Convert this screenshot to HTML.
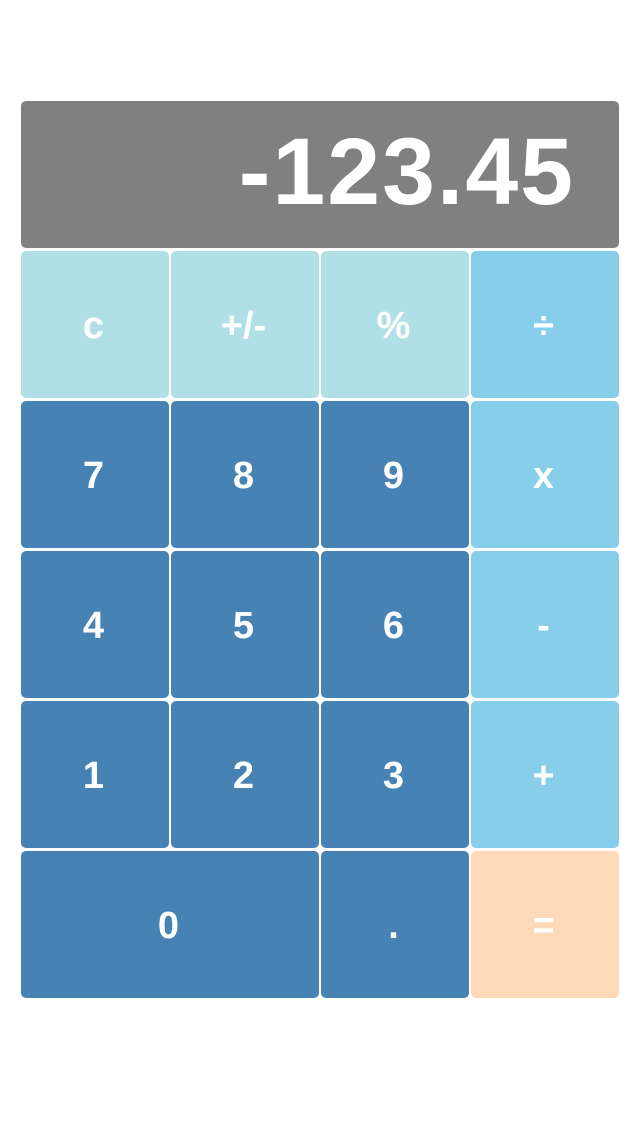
<!DOCTYPE html>
<html><head><style>
body{margin:0;width:640px;height:1136px;background:#fff;position:relative;font-family:"Liberation Sans",Arial,sans-serif;overflow:hidden}
.d{position:absolute;left:21px;top:101px;width:598px;height:147px;background:#808080;border-radius:5px}
.t{position:absolute;right:44px;bottom:28px;color:#fff;font-weight:bold;font-size:95px;line-height:1;letter-spacing:2px}
.b{position:absolute;width:148px;height:147px;border-radius:5px;color:#fff;font-weight:bold;font-size:38px;display:flex;align-items:center;justify-content:center;padding-top:4px;box-sizing:border-box;text-indent:-3px}
.p{background:#B0E0E6}.s{background:#87CEEB}.n{background:#4682B4}.q{background:#FFDAB9}
</style></head><body>
<div class="d"><div class="t">-123.45</div></div>
<div class="b p" style="left:21px;top:251px">c</div>
<div class="b p" style="left:171px;top:251px">+/-</div>
<div class="b p" style="left:321px;top:251px">%</div>
<div class="b s" style="left:471px;top:251px">÷</div>
<div class="b n" style="left:21px;top:401px">7</div>
<div class="b n" style="left:171px;top:401px">8</div>
<div class="b n" style="left:321px;top:401px">9</div>
<div class="b s" style="left:471px;top:401px">x</div>
<div class="b n" style="left:21px;top:551px">4</div>
<div class="b n" style="left:171px;top:551px">5</div>
<div class="b n" style="left:321px;top:551px">6</div>
<div class="b s" style="left:471px;top:551px">-</div>
<div class="b n" style="left:21px;top:701px">1</div>
<div class="b n" style="left:171px;top:701px">2</div>
<div class="b n" style="left:321px;top:701px">3</div>
<div class="b s" style="left:471px;top:701px">+</div>
<div class="b n" style="left:21px;top:851px;width:298px">0</div>
<div class="b n" style="left:321px;top:851px">.</div>
<div class="b q" style="left:471px;top:851px">=</div>
</body></html>
